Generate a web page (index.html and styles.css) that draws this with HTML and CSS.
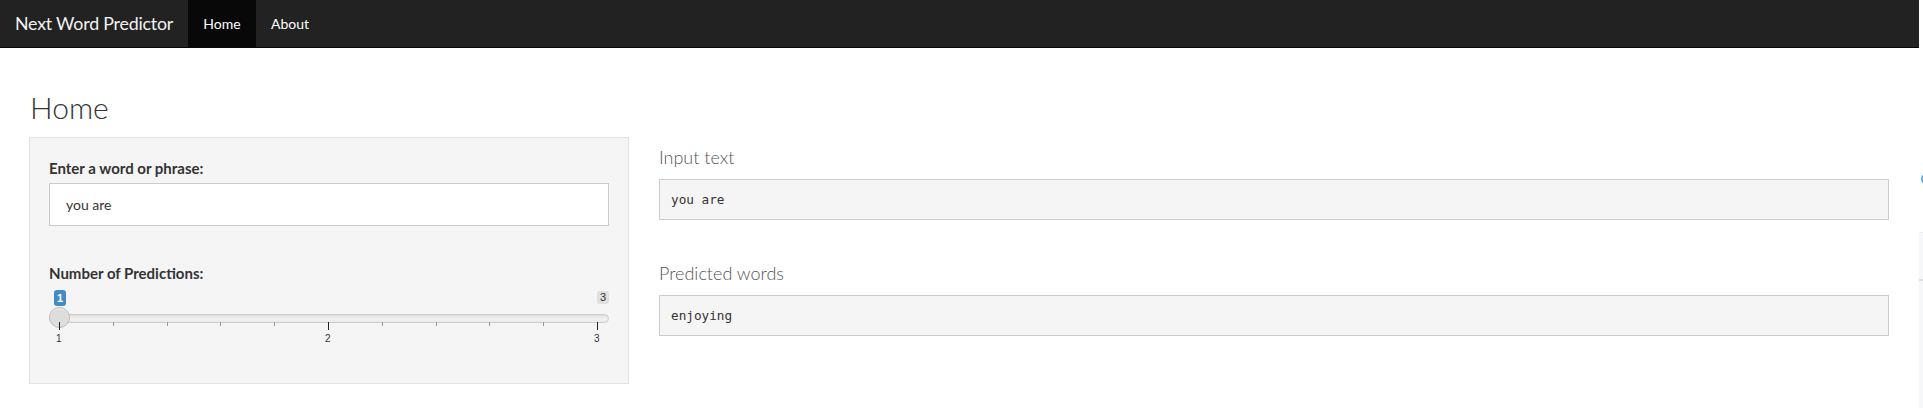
FILE: index.html
```html
<!DOCTYPE html>
<html>
<head>
<meta charset="utf-8">
<title>Next Word Predictor</title>
<link rel="stylesheet" href="styles.css">
</head>
<body>
<div class="page">
  <nav class="navbar">
    <span class="brand">Next Word Predictor</span>
    <a class="nav-link active">Home</a>
    <a class="nav-link">About</a>
  </nav>
  <div class="content">
    <h2 class="title">Home</h2>
    <div class="row">
      <div class="well">
        <label class="ctl-label">Enter a word or phrase:</label>
        <div class="text-input">you are</div>
        <label class="ctl-label slider-label">Number of Predictions:</label>
        <div class="slider">
          <div class="track"></div>
          <span class="badge badge-from">1</span>
          <span class="badge badge-max">3</span>
          <span class="handle"></span>
          <div class="grid">
            <div class="tick major"><span>1</span></div>
            <div class="tick"></div>
            <div class="tick"></div>
            <div class="tick"></div>
            <div class="tick"></div>
            <div class="tick major"><span>2</span></div>
            <div class="tick"></div>
            <div class="tick"></div>
            <div class="tick"></div>
            <div class="tick"></div>
            <div class="tick major"><span>3</span></div>
          </div>
        </div>
      </div>
      <div class="main-panel">
        <h4 class="out-label">Input text</h4>
        <pre class="out">you are</pre>
        <h4 class="out-label second">Predicted words</h4>
        <pre class="out">enjoying</pre>
      </div>
    </div>
  </div>
  <div class="edge">
    <span class="edge-dot"></span>
    <div class="edge-strip"></div>
  </div>
</div>
</body>
</html>
```

FILE: styles.css
```css
* { box-sizing: border-box; }
html, body { margin: 0; padding: 0; background: #fff; }
body {
  font-family: Lato, "Open Sans", sans-serif;
  color: #333;
  width: 1923px;
  height: 408px;
  overflow: hidden;
}
.page { position: relative; width: 1923px; height: 408px; }

.navbar {
  width: 1919px;
  height: 48px;
  background: #222;
  border-bottom: 1px solid #080808;
  display: flex;
  align-items: stretch;
}
.brand {
  flex: none;
  display: flex;
  align-items: center;
  white-space: nowrap;
  padding: 0 0 2px 15px;
  width: 188px;
  font-size: 17.8px;
  color: #f2f2f2;
  letter-spacing: -0.2px;
}
.nav-link {
  display: flex;
  align-items: center;
  padding: 0 15px 1px 15px;
  font-size: 14px;
  font-weight: 400;
  color: #fff;
}
.nav-link.active { background: #080808; width: 68px; justify-content: center; }

.content { padding-left: 30px; }
.title {
  margin: 42px 0 12px 0;
  font-size: 30px;
  line-height: 35px;
  font-weight: 300;
  color: #333;
}
.row { display: flex; align-items: flex-start; margin-left: -1px; }

.well {
  width: 600px;
  height: 247px;
  background: #f5f5f5;
  border: 1px solid #e3e3e3;
  padding: 20px 19px 0 19px;
}
.ctl-label {
  display: block;
  font-size: 15px;
  font-weight: 700;
  line-height: 20px;
  color: #333;
}
.text-input {
  margin-top: 5px;
  width: 560px;
  height: 43px;
  background: #fff;
  border: 1px solid #ccc;
  padding: 10px 16px;
  font-size: 14px;
  line-height: 21px;
  color: #333;
}
.slider-label { margin-top: 37px; }

.slider {
  position: relative;
  width: 560px;
  height: 64px;
}
.track {
  position: absolute;
  left: 0; right: 0;
  top: 31px;
  height: 9px;
  border: 1px solid #cccccc;
  border-radius: 5px;
  background: linear-gradient(#dedede, #f2f2f2 60%, #e9e9e9);
}
.badge {
  position: absolute;
  font-family: "Liberation Sans", Arial, sans-serif;
  font-size: 11px;
  text-align: center;
  border-radius: 3px;
}
.badge-from {
  left: 5px; top: 7px;
  width: 12px; height: 16px;
  line-height: 16px;
  background: #428bca;
  color: #fff;
  font-weight: 700;
}
.badge-max {
  right: 0; top: 8px;
  width: 12px; height: 13px;
  line-height: 13px;
  background: #e0e0e0;
  color: #333;
}
.handle {
  position: absolute;
  left: 0; top: 24px;
  width: 21px; height: 21px;
  border-radius: 50%;
  border: 1px solid #b8b8b8;
  background: #dddddd;
  box-shadow: inset 0 1px 1px rgba(255,255,255,0.6);
}
.grid {
  position: absolute;
  left: 10px; top: 39px;
  width: 539px;
  display: flex;
  justify-content: space-between;
}
.tick {
  position: relative;
  width: 1px;
  height: 4px;
  background: #999;
}
.tick.major { height: 8px; background: #222; }
.tick span {
  position: absolute;
  top: 12px;
  left: -3px;
  font-family: "Liberation Sans", Arial, sans-serif;
  font-size: 10px;
  line-height: 10px;
  color: #333;
}

.main-panel { margin-left: 30px; width: 1230px; padding-top: 10px; }
.out-label {
  margin: 0 0 12px 0;
  font-size: 18px;
  line-height: 20px;
  font-weight: 300;
  color: #555;
}
.out-label.second { margin-top: 43px; }
.out {
  margin: 0;
  height: 41px;
  background: #f5f5f5;
  border: 1px solid #ccc;
  padding: 10px 11px;
  font-family: "DejaVu Sans Mono", "Liberation Mono", monospace;
  font-size: 12.7px;
  line-height: 19px;
  color: #333;
}

.edge {
  position: absolute;
  left: 1919px; top: 0;
  width: 4px; height: 408px;
}
.edge-dot {
  position: absolute;
  left: 2px; top: 173px;
  width: 12px; height: 12px;
  border-radius: 50%;
  background: #6aa6e0;
}
.edge-strip {
  position: absolute;
  left: 0; top: 232px;
  width: 4px; height: 176px;
  background: #f6f7f9;
  border-top: 1px solid #eef0f3;
}
.edge-strip::after {
  content: "";
  position: absolute;
  left: 0; right: 0; top: 46px;
  height: 2px;
  background: #dcdee2;
}
```
